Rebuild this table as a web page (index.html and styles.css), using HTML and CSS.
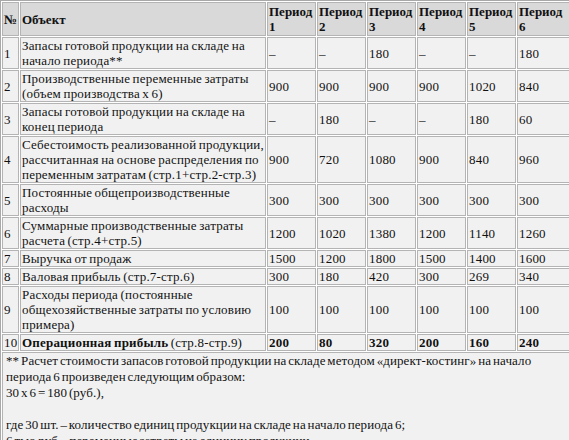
FILE: index.html
```html
<!DOCTYPE html>
<html lang="ru">
<head>
<meta charset="utf-8">
<link rel="stylesheet" href="styles.css">
</head>
<body>
<table class="report">
  <colgroup>
    <col class="c-num"><col class="c-name"><col class="c-p"><col class="c-p"><col class="c-p"><col class="c-p"><col class="c-p"><col class="c-last">
  </colgroup>
  <thead>
    <tr>
      <th>№</th><th>Объект</th><th>Период 1</th><th>Период 2</th><th>Период 3</th><th>Период 4</th><th>Период 5</th><th>Период 6</th>
    </tr>
  </thead>
  <tbody>
    <tr><td>1</td><td>Запасы готовой продукции на складе на начало периода**</td><td>–</td><td>–</td><td>180</td><td>–</td><td>–</td><td>180</td></tr>
    <tr><td>2</td><td>Производственные переменные затраты (объем производства х 6)</td><td>900</td><td>900</td><td>900</td><td>900</td><td>1020</td><td>840</td></tr>
    <tr><td>3</td><td>Запасы готовой продукции на складе на конец периода</td><td>–</td><td>180</td><td>–</td><td>–</td><td>180</td><td>60</td></tr>
    <tr><td>4</td><td>Себестоимость реализованной продукции, рассчитанная на основе распределения по переменным затратам (стр.1+стр.2-стр.3)</td><td>900</td><td>720</td><td>1080</td><td>900</td><td>840</td><td>960</td></tr>
    <tr><td>5</td><td>Постоянные общепроизводственные расходы</td><td>300</td><td>300</td><td>300</td><td>300</td><td>300</td><td>300</td></tr>
    <tr><td>6</td><td>Суммарные производственные затраты расчета (стр.4+стр.5)</td><td>1200</td><td>1020</td><td>1380</td><td>1200</td><td>1140</td><td>1260</td></tr>
    <tr><td>7</td><td>Выручка от продаж</td><td>1500</td><td>1200</td><td>1800</td><td>1500</td><td>1400</td><td>1600</td></tr>
    <tr><td>8</td><td>Валовая прибыль (стр.7-стр.6)</td><td>300</td><td>180</td><td>420</td><td>300</td><td>269</td><td>340</td></tr>
    <tr><td>9</td><td>Расходы периода (постоянные общехозяйственные затраты по условию примера)</td><td>100</td><td>100</td><td>100</td><td>100</td><td>100</td><td>100</td></tr>
    <tr class="total"><td>10</td><td><b>Операционная прибыль</b> (стр.8-стр.9)</td><td><b>200</b></td><td><b>80</b></td><td><b>320</b></td><td><b>200</b></td><td><b>160</b></td><td><b>240</b></td></tr>
    <tr><td class="note" colspan="8">** Расчет стоимости запасов готовой продукции на складе методом «директ-костинг» на начало периода 6 произведен следующим образом:<br>30 х 6 = 180 (руб.),<br><br>где 30 шт. – количество единиц продукции на складе на начало периода 6;<br>6 тыс.руб. - переменные затраты на единицу продукции</td></tr>
  </tbody>
</table>
</body>
</html>
```
FILE: styles.css
```css
html, body {
  margin: 0;
  padding: 0;
  background: #ffffff;
}
body {
  font-family: "Liberation Serif", "Times New Roman", serif;
  font-size: 13px;
  line-height: 15px;
  color: #111;
  overflow: hidden;
}
.report {
  table-layout: fixed;
  width: 567px;
  border-collapse: separate;
  border-spacing: 1px;
  border: 1px solid #a8a8a8;
  background: #ffffff;
}
.c-num { width: 17px; }
.c-name { width: 246px; }
.c-p { width: 49px; }
.c-last { width: 54px; }
.report th,
.report td {
  border: 1px solid #b4b4b4;
  padding: 0 1px;
  background: #f1f1f1;
  text-align: left;
  vertical-align: middle;
  word-spacing: -1px;
  letter-spacing: 0.2px;
}
.report th {
  background: #d9d9d9;
  font-weight: bold;
  padding-top: 1px;
  padding-bottom: 1px;
  letter-spacing: 0;
}
.report td.note {
  line-height: 16px;
  vertical-align: top;
  padding: 0 3px;
  word-spacing: -1.5px;
  letter-spacing: 0.1px;
}
```
